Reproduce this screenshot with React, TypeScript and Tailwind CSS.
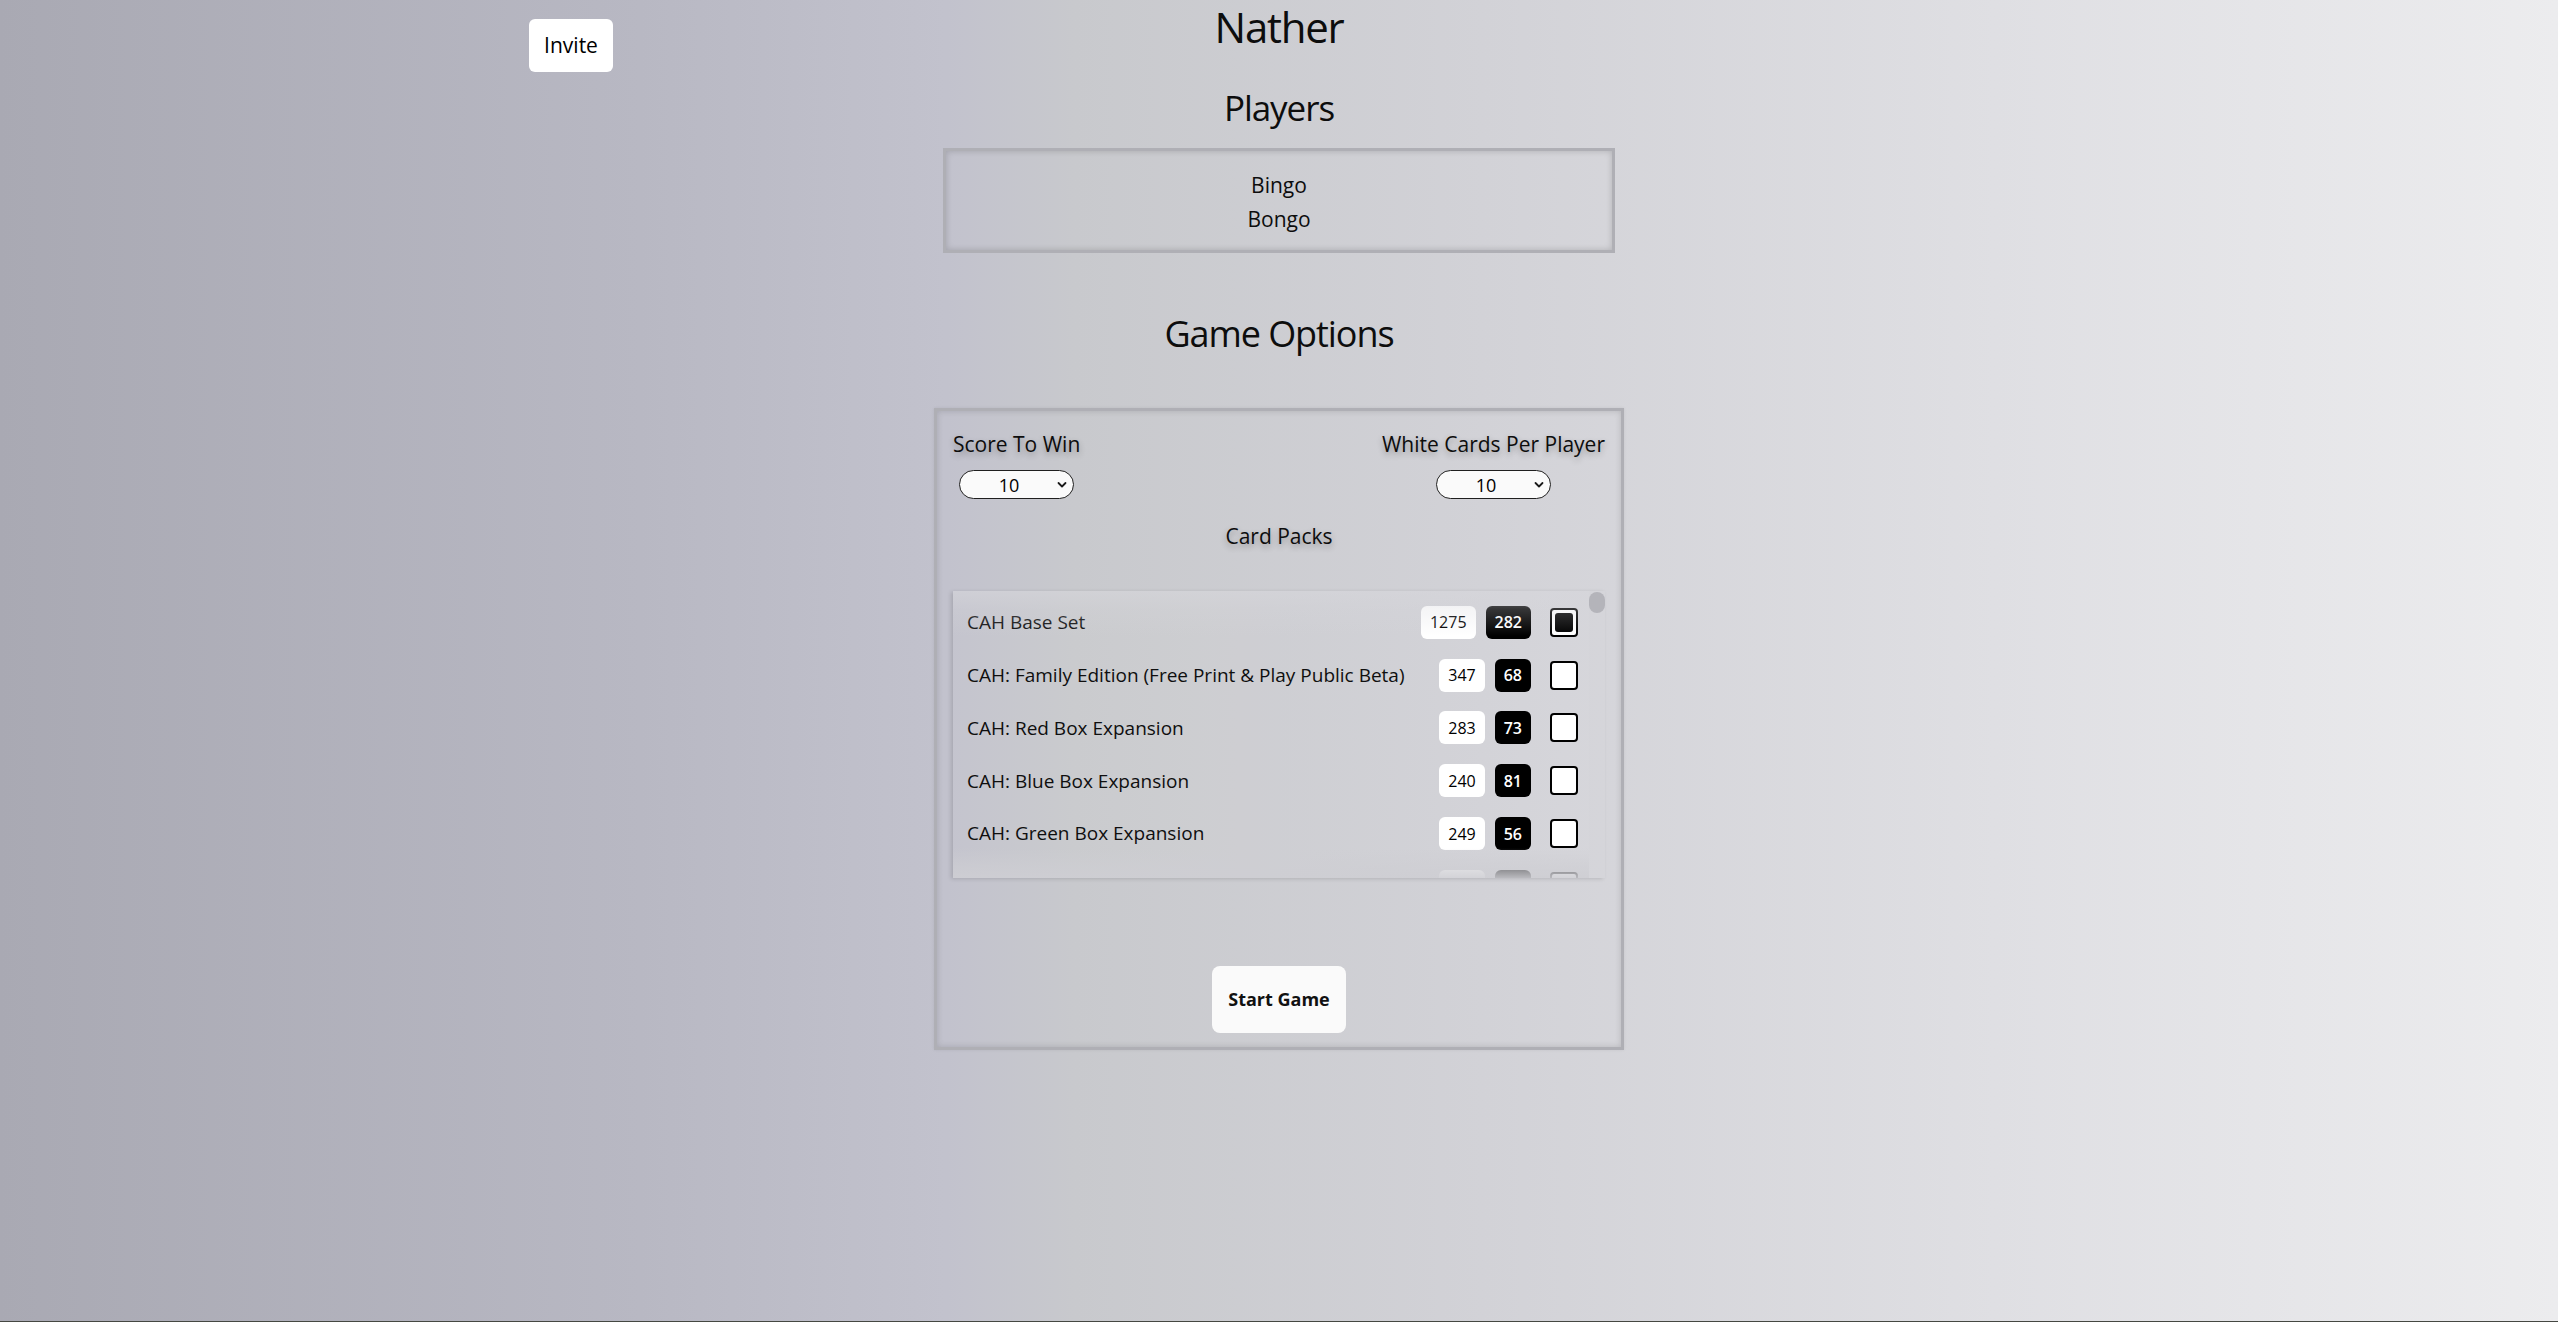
import React from "react";

type Pack = { name: string; white: number; black: number; checked?: boolean };

const first: Pack[] = [
  { name: "CAH Base Set", white: 1275, black: 282, checked: true },
  { name: "CAH: Family Edition (Free Print & Play Public Beta)", white: 347, black: 68 },
  { name: "CAH: Red Box Expansion", white: 283, black: 73 },
  { name: "CAH: Blue Box Expansion", white: 240, black: 81 },
  { name: "CAH: Green Box Expansion", white: 249, black: 56 },
];

const extraNames = [
  "CAH: Absurd Box Expansion",
  "CAH: Box Expansion",
  "CAH: Hidden Compartment",
  "CAH: 2000s Nostalgia Pack",
  "CAH: 90s Nostalgia Pack",
  "CAH: A.I. Pack",
  "CAH: Ass Pack",
  "CAH: Cards Against Humanity Saves America Pack",
  "CAH: College Pack",
  "CAH: Dad Pack",
  "CAH: Desert Bus For Hope Pack",
  "CAH: Fantasy Pack",
  "CAH: Food Pack",
  "CAH: Geek Pack",
  "CAH: Hanukkah LOL Pack",
  "CAH: Human Pack",
  "CAH: Jack White Show Pack",
  "CAH: Mass Effect Pack",
  "CAH: Mom Pack",
  "CAH: Nerd Bundle",
  "CAH: Period Pack",
  "CAH: Pride Pack",
  "CAH: Science Pack",
  "CAH: Sci-Fi Pack",
  "CAH: Seasons Greetings Pack",
  "CAH: Tabletop Pack",
  "CAH: Theatre Pack",
  "CAH: Retail Pack",
  "CAH: Weed Pack",
  "CAH: World Wide Web Pack",
  "CAH: Vote for Hillary Pack",
  "CAH: Vote for Trump Pack",
  "CAH: Post-Trump Pack",
  "CAH: Hidden Gems Bundle",
  "CAH: Reject Pack",
  "CAH: Reject Pack 2",
  "CAH: Reject Pack 3",
  "CAH: Holiday Bullshit",
  "CAH: 2012 Holiday Pack",
  "CAH: 2013 Holiday Pack",
  "CAH: 2014 Holiday Pack",
  "CAH: PAX East 2013 Pack A",
  "CAH: PAX East 2013 Pack B",
  "CAH: PAX East 2013 Pack C",
  "CAH: PAX Prime 2013 Pack",
  "CAH: PAX East 2014 Pack",
  "CAH: PAX Prime 2014 Pack",
  "CAH: PAX Prime 2015 Food Packs",
  "CAH: Main Deck",
  "CAH: First Expansion",
  "CAH: Second Expansion",
  "CAH: Third Expansion",
  "CAH: Fourth Expansion",
  "CAH: Fifth Expansion",
  "CAH: Sixth Expansion",
  "CAH: Canadian Conversion Kit",
  "CAH: UK Conversion Kit",
  "CAH: Australia Conversion Kit",
  "CAH: Procedurally-Generated Cards",
  "CAH: Everything Box",
  "CAH: Family Edition Expansion",
  "CAH: Jew Pack",
  "CAH: Twitter Pack",
  "CAH: Gen Con 2018 Midterm Election Pack",
  "CAH: Shit List",
  "CAH: Hidden Gems - Pride",
  "CAH: Climate Change Pack",
  "CAH: Toxic Masculinity Pack",
  "CAH: Hanukkah Pack",
];

const packs: Pack[] = [
  ...first,
  ...extraNames.map((name, i) => ({
    name,
    white: i === 0 ? 246 : 12 + ((i * 53) % 180),
    black: i === 0 ? 51 : 2 + ((i * 17) % 40),
  })),
];

function Chevron() {
  return (
    <svg
      width="10"
      height="7"
      viewBox="0 0 10 7"
      className="pointer-events-none absolute right-[7px] top-1/2 -translate-y-1/2"
    >
      <path d="M1.5 1.5 L5 5 L8.5 1.5" fill="none" stroke="#1a1a1a" strokeWidth="1.8" strokeLinecap="round" strokeLinejoin="round" />
    </svg>
  );
}

function Select() {
  return (
    <div className="relative mt-[12px] h-[29px] w-[115px]">
      <select
        defaultValue="10"
        className="h-full w-full appearance-none rounded-full border border-[#1f1f1f] bg-[#fafafa] pl-[9px] pr-[24px] text-center text-[18px] leading-none text-black outline-none [text-align-last:center]"
      >
        <option value="5">5</option>
        <option value="10">10</option>
        <option value="15">15</option>
      </select>
      <Chevron />
    </div>
  );
}

function PackRow({ p }: { p: Pack }) {
  return (
    <div className="flex h-[52.8px] shrink-0 items-center pl-[14px] pr-[11px]">
      <span className="flex-1 truncate text-[19px] text-[#0f0f0f]">{p.name}</span>
      <span className="flex h-[33px] items-center rounded-[6px] bg-white px-[9px] text-[16px] text-black">
        {p.white}
      </span>
      <span className="ml-[10px] flex h-[33px] items-center rounded-[6px] bg-black px-[9px] text-[16px] font-semibold text-white">
        {p.black}
      </span>
      <span className="ml-[19px] flex h-[29px] w-[28px] items-center justify-center rounded-[4px] border-2 border-black bg-white">
        {p.checked ? <span className="h-[19px] w-[18px] rounded-[3px] bg-black" /> : null}
      </span>
    </div>
  );
}

export default function App() {
  return (
    <div
      className="box-border h-screen w-full overflow-hidden border-b border-[#454842] bg-[linear-gradient(90deg,#a9a9b3_0%,#b8b8c3_25%,#c2c2cd_37%,#c8c9cd_42%,#d2d2d7_58%,#dfdfe3_78%,#ececee_100%)] text-[#0d0d0d]"
      style={{ fontFamily: '"Open Sans", "Noto Sans", sans-serif' }}
    >
      <div className="mx-auto grid h-[72px] w-[1500px] grid-cols-[1fr_auto_1fr] items-start">
        <button className="mt-[19px] h-[53px] w-[84px] justify-self-start rounded-[6px] bg-white text-[21px] text-black">
          Invite
        </button>
        <h1 className="-mt-[2px] text-center text-[42px] font-normal leading-[58px] tracking-[-0.03em]">Nather</h1>
        <div />
      </div>

      <div className="flex flex-col items-center">
        <h2 className="mt-[12px] text-[35px] font-normal leading-[48px] tracking-[-0.03em]">Players</h2>

        <div className="mt-[16px] box-border flex w-[672px] flex-col items-center border-[3px] border-[#afafb5] pb-[14px] pt-[17px] text-[21px] leading-[34px] shadow-[inset_0_0_6px_rgba(0,0,0,0.18)]">
          <div>Bingo</div>
          <div>Bongo</div>
        </div>

        <h2 className="mt-[57px] text-[36px] font-normal leading-[48px] tracking-[-0.03em]">Game Options</h2>

        <div className="mt-[50px] box-border flex w-[690px] flex-col border-[3px] border-[#afafb5] px-[16px] pb-[14px] pt-[19px] shadow-[inset_0_0_6px_rgba(0,0,0,0.15),0_0_3px_rgba(0,0,0,0.08)]">
          <div className="flex justify-between">
            <div className="flex flex-col items-center">
              <div className="text-[21px] leading-[28px] [text-shadow:0_3px_6px_rgba(0,0,0,0.3)]">Score To Win</div>
              <Select />
            </div>
            <div className="flex flex-col items-center">
              <div className="text-[21px] leading-[28px] [text-shadow:0_3px_6px_rgba(0,0,0,0.3)]">White Cards Per Player</div>
              <Select />
            </div>
          </div>

          <div className="mt-[23px] text-center text-[21px] leading-[28px] [text-shadow:0_3px_6px_rgba(0,0,0,0.3)]">
            Card Packs
          </div>

          <div className="relative mt-[41px] flex h-[287px] w-full bg-white/[0.04] shadow-[-2px_1px_4px_rgba(0,0,0,0.14)]">
            <div className="relative min-w-0 flex-1">
              <div className="flex h-full flex-col overflow-y-auto pt-[5px] [scrollbar-width:none]">
                {packs.map((p, i) => (
                  <PackRow key={i} p={p} />
                ))}
              </div>
              <div className="pointer-events-none absolute left-0 right-0 top-0 h-[45px] bg-[linear-gradient(180deg,rgba(214,214,219,0.6)_0%,rgba(214,214,219,0.25)_40%,rgba(214,214,219,0)_100%)]" />
              <div className="pointer-events-none absolute bottom-0 left-0 right-0 h-[30px] bg-[linear-gradient(0deg,rgba(206,206,211,0.9)_0%,rgba(206,206,211,0.6)_40%,rgba(206,206,211,0)_100%)]" />
            </div>
            <div className="flex w-[16px] flex-col bg-[#d3d3d8]/30 pt-[1px]">
              <div className="h-[21px] w-[16px] rounded-full bg-[#b4b4ba]" />
            </div>
          </div>

          <button className="mx-auto mt-[88px] h-[67px] w-[134px] rounded-[8px] bg-[#fafafa] text-[18px] font-bold text-[#111]">
            Start Game
          </button>
        </div>
      </div>
    </div>
  );
}
